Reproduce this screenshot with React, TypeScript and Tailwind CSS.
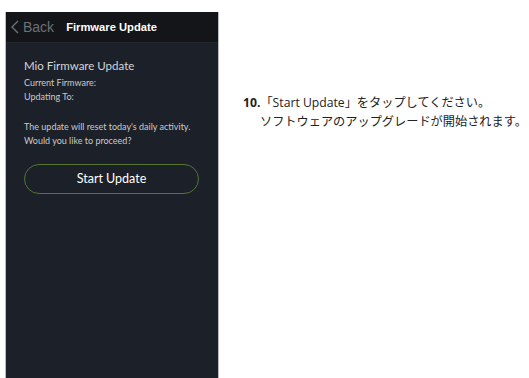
import React from 'react'

const PhoneScreen = () => {
  return (
    <div className="flex flex-col w-[214px] h-[366px] mt-[12px] ml-[5px] border-x border-[#b9bcc0] bg-[#1c2028]">
      <div className="flex flex-row items-center h-[31px] bg-[#131518] border-b border-[#23262b] px-[4px] font-['Liberation_Sans',sans-serif]">
        <div className="flex flex-row items-center text-[#6d7075] text-[14px] leading-none">
          <svg width="10" height="16" viewBox="0 0 10 16" className="mr-[3px]">
            <path d="M8 2 L2 8 L8 14" fill="none" stroke="#6d7075" strokeWidth="1.4" />
          </svg>
          Back
        </div>
        <div className="ml-[12px] text-white font-bold text-[11.2px]">Firmware Update</div>
      </div>
      <div className="flex flex-col px-[18px] pt-[15px] text-[#c9cbcf] font-['Lato',sans-serif]">
        <div className="text-[11.5px] leading-[16px] text-[#d4d6d9]">Mio Firmware Update</div>
        <div className="text-[9px] leading-[14px] mt-[2px]">Current Firmware:</div>
        <div className="text-[9px] leading-[14px]">Updating To:</div>
        <div className="text-[9px] leading-[14px] mt-[16px] whitespace-nowrap">
          The update will reset today&apos;s daily activity.
          <br />
          Would you like to proceed?
        </div>
        <button className="mt-[16px] w-[175px] h-[30px] rounded-full border-[1.5px] border-[#557530] text-white text-[12.5px] font-['Lato',sans-serif]">
          Start Update
        </button>
      </div>
    </div>
  )
}

const App = () => {
  return (
    <div className="flex flex-row w-[529px] h-[378px] bg-white overflow-hidden font-['Lato',sans-serif]">
      <PhoneScreen />
      <div className="flex flex-col ml-[24px] mt-[93px] text-[12.2px] leading-[19px] text-[#222] font-['Open_Sans','Noto_Sans_CJK_JP',sans-serif] whitespace-nowrap">
        <div>
          <span className="font-bold">10.</span>「Start Update」をタップしてください。
        </div>
        <div className="pl-[17px]">ソフトウェアのアップグレードが開始されます。</div>
      </div>
    </div>
  )
}

export default App
